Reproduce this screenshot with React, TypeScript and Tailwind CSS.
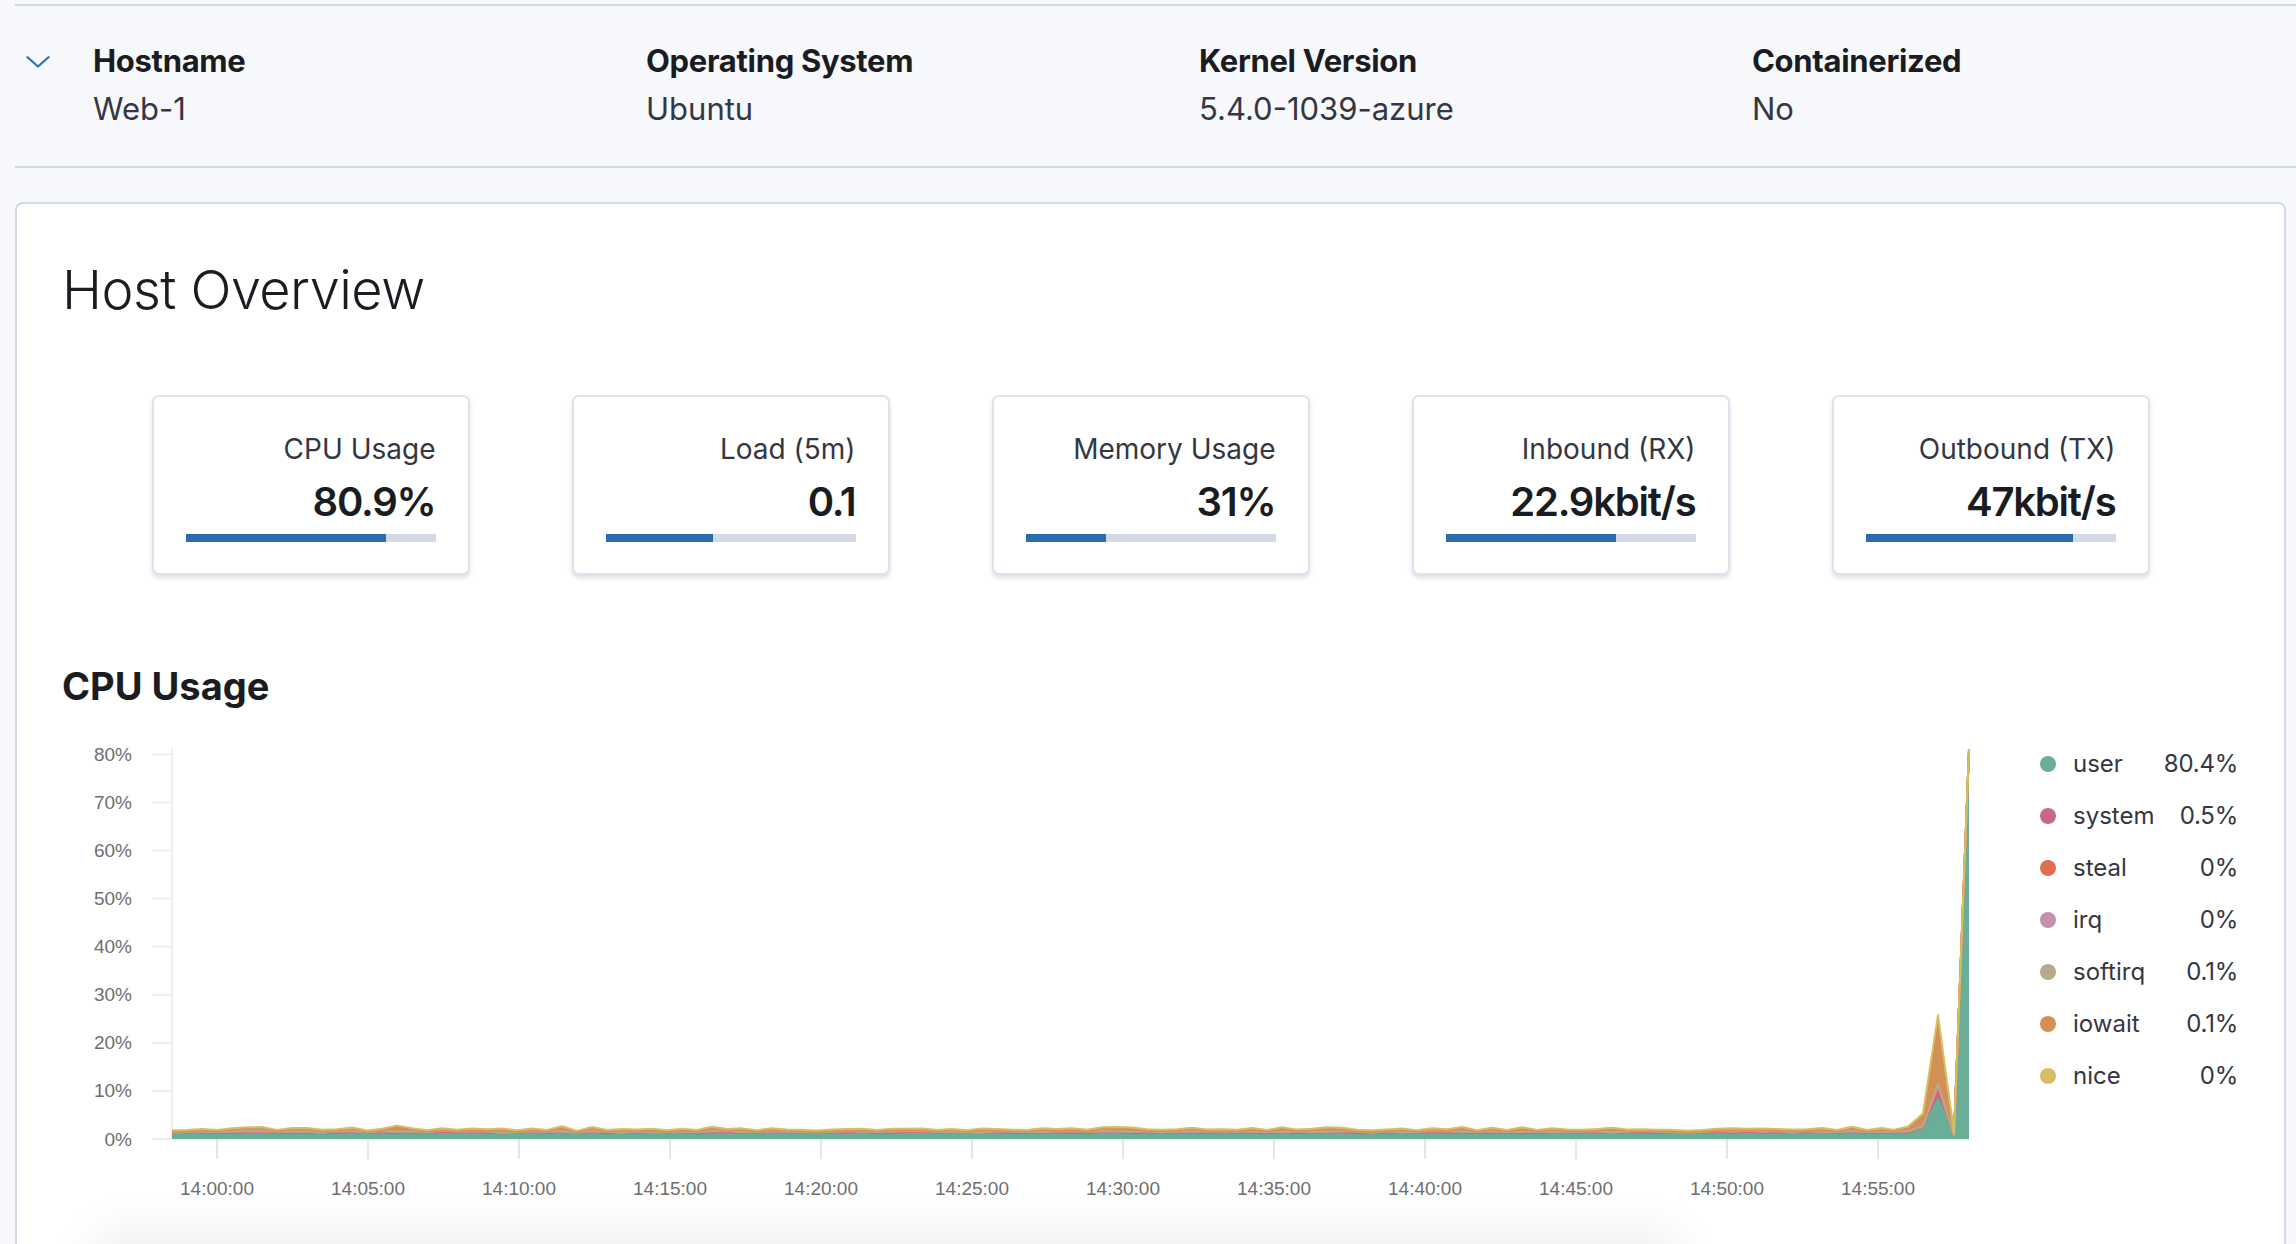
import React from 'react';

const seriesMeta = [
    { key: 'user', color: '#6aae97', value: '80.4%' },
    { key: 'system', color: '#c9668a', value: '0.5%' },
    { key: 'steal', color: '#df6e51', value: '0%' },
    { key: 'irq', color: '#c491ad', value: '0%' },
    { key: 'softirq', color: '#b7a98a', value: '0.1%' },
    { key: 'iowait', color: '#d38f55', value: '0.1%' },
    { key: 'nice', color: '#d5bf61', value: '0%' },
];

const stats = [
    { label: 'CPU Usage', value: '80.9%', pct: 80 },
    { label: 'Load (5m)', value: '0.1', pct: 43 },
    { label: 'Memory Usage', value: '31%', pct: 32 },
    { label: 'Inbound (RX)', value: '22.9kbit/s', pct: 68 },
    { label: 'Outbound (TX)', value: '47kbit/s', pct: 83 },
];

const rand = (i: number, s: number) => {
    const x = Math.sin(i * 12.9898 + s * 78.233) * 43758.5453;
    return x - Math.floor(x);
};

// svg sits at page x=62, y=725
const OX = 62;
const Y0 = 413;
const K = 390 / 81.1;

const buildData = () => {
    const pts: { x: number; v: number[] }[] = [];
    for (let i = 0; i <= 114; i++) {
        const up = i % 2 === 0;
        const bump = i === 15 ? 0.9 : i === 63 ? 0.5 : i === 77 ? 0.5 : i === 5 || i === 9 ? 0.4 : 0;
        pts.push({
            x: 172 + i * 15 - OX,
            v: [
                0.75 + 0.3 * rand(i, 1),
                0.4 + 0.25 * rand(i, 2),
                0,
                0.04,
                0.08,
                0.08 + (up ? 0.5 * rand(i, 3) : 0.05 * rand(i, 3)) + bump,
                0.22 + (up ? 0.2 * rand(i, 4) : 0.03),
            ],
        });
    }
    const spike: [number, number[]][] = [
        [1893, [0.9, 0.5, 0, 0.05, 0.1, 0.1, 0.25]],
        [1908, [1.0, 0.5, 0, 0.05, 0.1, 0.6, 0.35]],
        [1923, [2.0, 0.5, 0, 0.1, 0.2, 1.9, 0.6]],
        [1938, [8.3, 2.3, 0, 0.5, 0.3, 13.0, 1.4]],
        [1954, [0.6, 0.2, 0, 0, 0.05, 0.15, 0.1]],
        [1969, [80.4, 0.5, 0, 0, 0.1, 0.1, 0]],
    ];
    spike.forEach(([x, v]) => pts.push({ x: x - OX, v }));
    return pts;
};

const CpuChart = () => {
    const data = buildData();
    const cum = data.map(d => {
        let acc = 0;
        return d.v.map(v => (acc += v));
    });
    const yOf = (p: number) => Y0 - p * K;
    const layers = seriesMeta.map((s, li) => {
        const top = data.map((d, i) => `${d.x},${yOf(cum[i][li]).toFixed(2)}`);
        const bottom = data
            .map((d, i) => `${d.x},${yOf(li === 0 ? 0 : cum[i][li - 1]).toFixed(2)}`)
            .reverse();
        return { color: s.color, area: `M${top.join(' L')} L${bottom.join(' L')} Z`, line: `M${top.join(' L')}` };
    });
    const yTicks = [0, 10, 20, 30, 40, 50, 60, 70, 80];
    const xTicks = ['14:00:00', '14:05:00', '14:10:00', '14:15:00', '14:20:00', '14:25:00', '14:30:00', '14:35:00', '14:40:00', '14:45:00', '14:50:00', '14:55:00'];

    return (
        <svg width="1940" height="485" className="shrink-0" style={{ fontFamily: '"Liberation Sans", Arial, sans-serif' }}>
            {yTicks.map(t => (
                <g key={t}>
                    <line x1="90" x2="109" y1={yOf(t)} y2={yOf(t)} stroke="#eeeeee" strokeWidth="2" />
                    <text x="70" y={yOf(t)} textAnchor="end" dominantBaseline="central" fontSize="19" fill="#6e6e6e">{t}%</text>
                </g>
            ))}
            <line x1="110" x2="110" y1="23" y2={Y0} stroke="#eeeeee" strokeWidth="2" />
            <line x1="110" x2="1907" y1={Y0 + 1} y2={Y0 + 1} stroke="#eeeeee" strokeWidth="2" />
            {xTicks.map((t, i) => (
                <g key={t}>
                    <line x1={155 + i * 151} x2={155 + i * 151} y1={Y0} y2={Y0 + 20} stroke="#e6e6e6" strokeWidth="2" />
                    <text x={155 + i * 151} y="462" textAnchor="middle" dominantBaseline="central" fontSize="19" fill="#6e6e6e">{t}</text>
                </g>
            ))}
            {layers.map((l, i) => (
                <path key={`a${i}`} d={l.area} fill={l.color} />
            ))}
            {layers.map((l, i) => (
                <path key={`l${i}`} d={l.line} fill="none" stroke={l.color} strokeWidth="2" strokeLinejoin="round" />
            ))}
        </svg>
    );
};

const App = () => {
    return (
        <div className="min-h-screen bg-[#f7f8fc] pt-[4px] font-['Inter',sans-serif] overflow-hidden">
            {/* host summary */}
            <div className="flex items-start ml-[15px] border-y-2 border-[#d3dae6] pt-[35px] pb-[38px]">
                <svg width="24" height="12" viewBox="0 0 24 12" className="ml-[11px] mt-[15px] shrink-0">
                    <path d="M1.5 1.2 L12 10.5 L22.5 1.2" fill="none" stroke="#2d6eb5" strokeWidth="2.2" strokeLinecap="round" strokeLinejoin="round" />
                </svg>
                <div className="flex ml-[43px]">
                    {[
                        ['Hostname', 'Web-1'],
                        ['Operating System', 'Ubuntu'],
                        ['Kernel Version', '5.4.0-1039-azure'],
                        ['Containerized', 'No'],
                    ].map(([k, v]) => (
                        <div key={k} className="w-[553px] flex flex-col gap-[10px] pt-[1px]">
                            <p className="text-[31px] leading-[38px] font-bold text-[#1a1c21] tracking-[-0.01em]">{k}</p>
                            <p className="text-[31px] leading-[38px] text-[#343741]">{v}</p>
                        </div>
                    ))}
                </div>
            </div>

            {/* overview panel */}
            <div className="mt-[34px] ml-[15px] mr-[10px] bg-white border-2 border-[#d3dae6] rounded-[8px] px-[45px] pt-[53px] pb-[60px]">
                <h2 className="text-[54px] leading-[65px] font-light text-[#1a1c21] tracking-[-0.01em]">Host Overview</h2>

                <div className="flex justify-center gap-[102px] mt-[73px]">
                    {stats.map(s => (
                        <div key={s.label} className="w-[318px] h-[180px] bg-white border-2 border-[#dde3ed] rounded-[7px] shadow-[0_3px_4px_rgba(152,162,179,0.35)] px-[32px] pt-[35px] flex flex-col items-end">
                            <p className="text-[28px] leading-[34px] text-[#343741]">{s.label}</p>
                            <p className="mt-[12px] text-[40px] leading-[48px] font-semibold text-[#1a1c21] tracking-[-0.03em]">{s.value}</p>
                            <div className="mt-[8px] h-[8px] w-full bg-[#d3dae6]">
                                <div className="h-full bg-[#2b6aad]" style={{ width: `${s.pct}%` }} />
                            </div>
                        </div>
                    ))}
                </div>

                <h3 className="mt-[88px] text-[38px] leading-[46px] font-bold text-[#1a1c21]">CPU Usage</h3>

                <div className="flex mt-[17px]">
                    <CpuChart />
                    <div className="ml-[38px] mt-[12px] w-[198px] flex flex-col">
                        {seriesMeta.map(s => (
                            <div key={s.key} className="h-[52px] flex items-center text-[24px] text-[#343741]">
                                <span className="w-[16px] h-[16px] rounded-full shrink-0" style={{ backgroundColor: s.color }} />
                                <span className="ml-[17px]">{s.key}</span>
                                <span className="ml-auto tracking-[-0.01em]">{s.value}</span>
                            </div>
                        ))}
                    </div>
                </div>

                <div className="mt-[40px] ml-[26px] w-[1596px] h-[80px] rounded-[40px] shadow-[0_-20px_50px_rgba(0,0,0,0.07)]" />
            </div>
        </div>
    );
};

export default App;
